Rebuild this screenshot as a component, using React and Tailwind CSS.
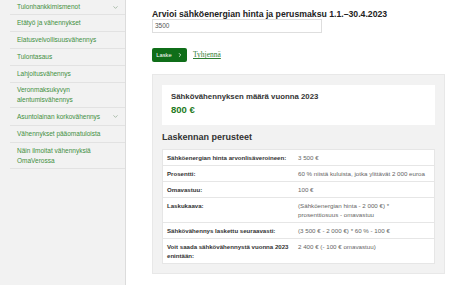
import { ChevronDown, ChevronRight } from "lucide-react";

const navItems = [
  { label: "Tulonhankkimismenot", h: "h-[15px]", chevron: true },
  { label: "Etätyö ja vähennykset", h: "h-[17px]" },
  { label: "Elatusvelvollisuusvähennys", h: "h-[17px]" },
  { label: "Tulontasaus", h: "h-[17px]" },
  { label: "Lahjoitusvähennys", h: "h-[17px]" },
  { label: ["Veronmaksukyvyn", "alentumisvähennys"], h: "h-[25px]" },
  { label: "Asuntolainan korkovähennys", h: "h-[18px]", chevron: true },
  { label: "Vähennykset pääomatuloista", h: "h-[17px]" },
  { label: ["Näin ilmoitat vähennyksiä", "OmaVerossa"], h: "h-[26px]" },
];

// each cell is a list of lines so the wrapping matches the page
const rows = [
  [["Sähköenergian hinta arvonlisäveroineen:"], ["3 500 €"]],
  [["Prosentti:"], ["60 % niistä kuluista, jotka ylittävät 2 000 euroa"]],
  [["Omavastuu:"], ["100 €"]],
  [["Laskukaava:"], ["(Sähköenergian hinta - 2 000 €) *", "prosenttiosuus - omavastuu"]],
  [["Sähkövähennys laskettu seuraavasti:"], ["(3 500 € - 2 000 €) * 60 % - 100 €"]],
  [["Voit saada sähkövähennystä vuonna 2023", "enintään:"], ["2 400 € (- 100 € omavastuu)"]],
];

function Lines({ lines }) {
  return lines.map((l) => (
    <span key={l} className="block whitespace-nowrap">
      {l}
    </span>
  ));
}

function Sidebar() {
  return (
    <aside className="w-[126px] shrink-0 bg-[#f2f2f2] border-r border-[#dcdcdc] min-h-[285px]">
      <ul className="ml-[10px]">
        {navItems.map((item, i) => (
          <li
            key={i}
            className={`${item.h} border-b border-[#e2e2e2] pl-[7px] pr-[6px] flex items-center justify-between text-[6.5px] leading-[10px] text-[#3f8f3f]`}
          >
            <span>
              <Lines lines={Array.isArray(item.label) ? item.label : [item.label]} />
            </span>
            {item.chevron && <ChevronDown size={7} strokeWidth={2} className="text-[#7a9a7a]" />}
          </li>
        ))}
      </ul>
    </aside>
  );
}

export default function App() {
  return (
    <div className="w-[468px] h-[285px] overflow-hidden flex bg-white font-['Liberation_Sans',Arial,sans-serif] text-[#222]">
      <Sidebar />
      <main className="pl-[26px] pt-[10px] flex-1">
        <label className="block text-[8.7px] font-bold leading-[9px] text-[#222] whitespace-nowrap">
          Arvioi sähköenergian hinta ja perusmaksu 1.1.–30.4.2023
        </label>
        <div className="w-[170px] h-[14px] border border-[#dedede] flex items-center pl-[2px] text-[6.5px] text-[#555]">
          3500
        </div>

        <div className="mt-[15px] flex items-center gap-[6px]">
          <button className="w-[35px] h-[14px] rounded-[2px] bg-[#0f6e19] text-white text-[5.8px] flex items-center justify-center gap-[5px]">
            Laske <ChevronRight size={6} strokeWidth={3} />
          </button>
          <a className="font-['Liberation_Serif',serif] text-[7.5px] text-[#2e7d32] underline">Tyhjennä</a>
        </div>

        <section className="mt-[12px] w-[293px] bg-[#f2f2f2] border border-[#e8e8e8] px-[9px] pt-[10px] pb-[9px]">
          <div className="bg-white h-[40px] pl-[9px] pt-[7px]">
            <p className="text-[7.8px] font-bold leading-[9px] text-[#333] whitespace-nowrap">
              Sähkövähennyksen määrä vuonna 2023
            </p>
            <p className="mt-[3px] text-[9.5px] font-bold leading-[12px] text-[#1e7a23]">800 €</p>
          </div>
          <h3 className="mt-[7px] text-[9px] font-semibold leading-[11px] text-[#333]">
            Laskennan perusteet
          </h3>
          <div className="mt-[6px] bg-white border border-[#e6e6e6] leading-[9px]">
            {rows.map(([a, b], i) => (
              <div
                key={i}
                className="grid grid-cols-[135px_1fr] border-b border-[#e6e6e6] last:border-b-0 py-[3px]"
              >
                <div className="pl-[4px] text-[6.1px] font-bold text-[#333]">
                  <Lines lines={a} />
                </div>
                <div className="text-[6.2px] text-[#666]">
                  <Lines lines={b} />
                </div>
              </div>
            ))}
          </div>
        </section>
      </main>
    </div>
  );
}
